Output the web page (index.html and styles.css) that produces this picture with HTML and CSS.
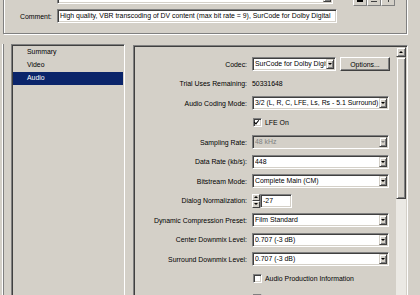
FILE: index.html
```html
<!DOCTYPE html>
<html>
<head>
<meta charset="utf-8">
<link rel="stylesheet" href="styles.css">
</head>
<body>
<div class="dlg">
  <div class="topgroup">
    <div class="toprow">
      <div class="combo topcombo"><span class="val"></span><span class="drop"><i></i></span></div>
      <div class="tbtns"><span class="tb"><b class="ico1"></b></span><span class="tb"><b class="ico2"></b></span><span class="tb"><b class="ico3"></b></span></div>
    </div>
    <div class="commentrow">
      <span class="clabel">Comment:</span>
      <div class="edit comment"><span class="val">High quality, VBR transcoding of DV content (max bit rate = 9), SurCode for Dolby Digital</span></div>
    </div>
  </div>
  <div class="main">
    <div class="list">
      <div class="item">Summary</div>
      <div class="item">Video</div>
      <div class="item sel">Audio</div>
    </div>
    <div class="panel">
      <div class="form">
        <div class="row">
          <span class="lbl">Codec:</span>
          <div class="ctl">
            <div class="combo w84"><span class="val">SurCode for Dolby Digital</span><span class="drop"><i></i></span></div>
            <div class="btn">Options...</div>
          </div>
        </div>
        <div class="row">
          <span class="lbl">Trial Uses Remaining:</span>
          <div class="ctl"><span class="plain">50331648</span></div>
        </div>
        <div class="row">
          <span class="lbl">Audio Coding Mode:</span>
          <div class="ctl"><div class="combo wide"><span class="val">3/2 (L, R, C, LFE, Ls, Rs - 5.1 Surround)</span><span class="drop"><i></i></span></div></div>
        </div>
        <div class="row">
          <span class="lbl"></span>
          <div class="ctl"><span class="chk on"></span><span class="chklbl">LFE On</span></div>
        </div>
        <div class="row">
          <span class="lbl">Sampling Rate:</span>
          <div class="ctl"><div class="combo wide dis"><span class="val">48 kHz</span><span class="drop"><i></i></span></div></div>
        </div>
        <div class="row">
          <span class="lbl">Data Rate (kb/s):</span>
          <div class="ctl"><div class="combo wide"><span class="val">448</span><span class="drop"><i></i></span></div></div>
        </div>
        <div class="row">
          <span class="lbl">Bitstream Mode:</span>
          <div class="ctl"><div class="combo wide"><span class="val">Complete Main (CM)</span><span class="drop"><i></i></span></div></div>
        </div>
        <div class="row">
          <span class="lbl">Dialog Normalization:</span>
          <div class="ctl">
            <div class="spin"><span class="sb up"><i></i></span><span class="sb dn"><i></i></span></div>
            <div class="edit num"><span class="val">-27</span></div>
          </div>
        </div>
        <div class="row">
          <span class="lbl">Dynamic Compression Preset:</span>
          <div class="ctl"><div class="combo wide"><span class="val">Film Standard</span><span class="drop"><i></i></span></div></div>
        </div>
        <div class="row">
          <span class="lbl">Center Downmix Level:</span>
          <div class="ctl"><div class="combo wide"><span class="val">0.707 (-3 dB)</span><span class="drop"><i></i></span></div></div>
        </div>
        <div class="row">
          <span class="lbl">Surround Downmix Level:</span>
          <div class="ctl"><div class="combo wide"><span class="val">0.707 (-3 dB)</span><span class="drop"><i></i></span></div></div>
        </div>
        <div class="row">
          <span class="lbl"></span>
          <div class="ctl"><span class="chk"></span><span class="chklbl">Audio Production Information</span></div>
        </div>
        <div class="row">
          <span class="lbl"></span>
          <div class="ctl"><span class="chk"></span><span class="chklbl">Copyright Exists</span></div>
        </div>
      </div>
      <div class="scroll">
        <span class="sarrow"><i></i></span>
        <span class="thumb"></span>
        <span class="track"></span>
      </div>
    </div>
  </div>
</div>
</body>
</html>
```
FILE: styles.css
```css
html, body {
  margin: 0;
  padding: 0;
}
body {
  width: 420px;
  height: 295px;
  overflow: hidden;
  background: #d4d0c8;
  font-family: "Liberation Sans", Arial, sans-serif;
  font-size: 6.9px;
  color: #000;
}
.dlg {
  width: 420px;
  height: 295px;
  overflow: hidden;
}
.topgroup {
  box-sizing: border-box;
  margin: -12px 0 0 3px;
  width: 404px;
  height: 44px;
  border: 1px solid #808080;
  border-top: 0;
  box-shadow: 1px 1px 0 #fff, inset 1px 0 0 #fff;
}
.toprow {
  display: flex;
  align-items: flex-start;
  margin: 2px 0 0 53px;
  height: 16px;
}
.combo {
  box-sizing: border-box;
  height: 14px;
  border: 1px solid;
  border-color: #808080 #fff #fff #808080;
  box-shadow: inset 1px 1px 0 #404040, inset -1px -1px 0 #d4d0c8;
  background: #fff;
  display: flex;
  align-items: center;
  padding: 2px;
  overflow: hidden;
}
.combo .val, .edit .val {
  flex: 1;
  min-width: 0;
  white-space: nowrap;
  overflow: hidden;
  line-height: 10px;
}
.drop {
  box-sizing: border-box;
  flex: none;
  width: 8px;
  height: 10px;
  margin-right: -1px;
  background: #d4d0c8;
  border: 1px solid;
  border-color: #d4d0c8 #404040 #404040 #d4d0c8;
  box-shadow: inset 1px 1px 0 #fff, inset -1px -1px 0 #808080;
  display: flex;
  align-items: center;
  justify-content: center;
}
.drop i {
  display: block;
  width: 0;
  height: 0;
  border-left: 2px solid transparent;
  border-right: 2px solid transparent;
  border-top: 2px solid #000;
}
.topcombo {
  width: 276px;
}
.tbtns {
  display: flex;
  margin-left: 20px;
}
.tb {
  box-sizing: border-box;
  width: 14px;
  height: 16px;
  border: 1px solid;
  border-color: #fff #808080 #808080 #fff;
  display: flex;
  align-items: flex-end;
  justify-content: center;
  padding-bottom: 3px;
}
.tb b {
  display: block;
  background: #000;
}
.ico1 { width: 6px; height: 2px; }
.ico2 { width: 6px; height: 1px; background: #404040 !important; }
.ico3 { width: 1px; height: 3px; background: #404040 !important; }
.commentrow {
  display: flex;
  align-items: center;
  margin-top: 3px;
  height: 14px;
}
.clabel {
  width: 53px;
  padding-left: 16px;
  box-sizing: border-box;
}
.edit {
  box-sizing: border-box;
  height: 14px;
  border: 1px solid;
  border-color: #808080 #fff #fff #808080;
  box-shadow: inset 1px 1px 0 #404040, inset -1px -1px 0 #d4d0c8;
  background: #fff;
  display: flex;
  align-items: center;
  padding: 2px;
}
.comment {
  width: 280px;
}
.main {
  display: flex;
  align-items: flex-start;
  margin-top: 10px;
  padding-left: 11px;
  height: 300px;
  border-left: 1px solid #fff;
  margin-left: 2px;
  box-shadow: inset 1px 0 0 #808080;
}
.list {
  box-sizing: border-box;
  width: 114px;
  height: 280px;
  margin-left: -3px;
  border: 1px solid;
  border-color: #808080 #fff #fff #808080;
  box-shadow: inset 1px 1px 0 #404040, inset -1px -1px 0 #d4d0c8;
  background: #d4d0c8;
  padding: 1px;
}
.item {
  height: 13px;
  line-height: 12px;
  padding-left: 14px;
}
.item.sel {
  background: #0a246a;
  color: #fff;
}
.panel {
  box-sizing: border-box;
  width: 275px;
  height: 280px;
  margin-left: 8px;
  margin-top: 1px;
  border: 1px solid;
  border-color: #808080 #fff #fff #808080;
  box-shadow: inset 1px 1px 0 #404040, inset -1px -1px 0 #d4d0c8;
  padding: 1px;
  display: flex;
}
.form {
  flex: 1;
  display: flex;
  flex-direction: column;
  gap: 5.5px;
  padding-top: 10px;
}
.row {
  display: flex;
  align-items: center;
  height: 14px;
}
.lbl {
  width: 112px;
  text-align: right;
  white-space: nowrap;
  flex: none;
}
.ctl {
  margin-left: 5px;
  display: flex;
  align-items: center;
}
.w84 {
  width: 84px;
}
.wide {
  width: 137px;
}
.btn {
  box-sizing: border-box;
  margin-left: 4px;
  width: 50px;
  height: 14px;
  border: 1px solid;
  border-color: #fff #404040 #404040 #fff;
  box-shadow: inset -1px -1px 0 #808080;
  display: flex;
  align-items: center;
  justify-content: center;
}
.dis {
  background: #d4d0c8;
  color: #808080;
}
.dis .drop i {
  border-top-color: #808080;
}
.chk {
  box-sizing: border-box;
  width: 9px;
  height: 9px;
  margin-left: 1px;
  border: 1px solid;
  border-color: #808080 #fff #fff #808080;
  box-shadow: inset 1px 1px 0 #404040, inset -1px -1px 0 #d4d0c8;
  background: #fff;
  position: relative;
}
.chk.on::after {
  content: "";
  position: absolute;
  left: 1px;
  top: 0;
  width: 2px;
  height: 4px;
  border-right: 1.5px solid #000;
  border-bottom: 1.5px solid #000;
  transform: rotate(40deg);
}
.chklbl {
  margin-left: 3px;
}
.spin {
  box-sizing: border-box;
  width: 8px;
  height: 14px;
  display: flex;
  flex-direction: column;
}
.sb {
  box-sizing: border-box;
  flex: 1;
  border: 1px solid;
  border-color: #fff #404040 #404040 #fff;
  display: flex;
  align-items: center;
  justify-content: center;
}
.sb i {
  display: block;
  width: 0;
  height: 0;
  border-left: 2px solid transparent;
  border-right: 2px solid transparent;
}
.sb.up i { border-bottom: 2px solid #000; }
.sb.dn i { border-top: 2px solid #000; }
.num {
  width: 32px;
}
.scroll {
  width: 10px;
  display: flex;
  flex-direction: column;
}
.sarrow {
  box-sizing: border-box;
  height: 10px;
  border: 1px solid;
  border-color: #d4d0c8 #404040 #404040 #d4d0c8;
  box-shadow: inset 1px 1px 0 #fff, inset -1px -1px 0 #808080;
  display: flex;
  align-items: center;
  justify-content: center;
}
.sarrow i {
  display: block;
  width: 0;
  height: 0;
  border-left: 2px solid transparent;
  border-right: 2px solid transparent;
  border-bottom: 2px solid #000;
}
.thumb {
  box-sizing: border-box;
  height: 142px;
  border: 1px solid;
  border-color: #d4d0c8 #404040 #404040 #d4d0c8;
  box-shadow: inset 1px 1px 0 #fff, inset -1px -1px 0 #808080;
}
.track {
  flex: 1;
  background: #ebe9e4;
}
```
